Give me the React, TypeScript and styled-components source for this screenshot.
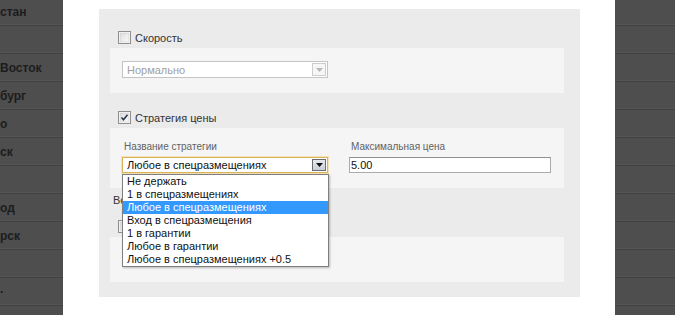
import React from "react";
import styled, { createGlobalStyle, css } from "styled-components";

const Global = createGlobalStyle`
  html, body { margin: 0; padding: 0; background: #4e4e4e; }
  body { font-family: "Liberation Sans", Arial, sans-serif; }
  * { box-sizing: border-box; }
`;

const Page = styled.div`
  display: flex;
  width: 675px;
  height: 315px;
  overflow: hidden;
  background: #4e4e4e;
`;

const Side = styled.div<{ $w: number }>`
  width: ${(p) => p.$w}px;
  flex: none;
  overflow: hidden;
  background: #4e4e4e;
`;

const SideList = styled.ul`
  list-style: none;
  margin: -2px 0 0;
  padding: 0;
`;

const SideItem = styled.li`
  height: 28px;
  border-bottom: 1px solid #414141;
  box-shadow: inset 0 -1px 0 #555;
  display: flex;
  align-items: center;
  white-space: nowrap;
  font-size: 12px;
  font-weight: bold;
  color: #1c1c1c;
  padding-top: 1px;
`;

const Modal = styled.div`
  width: 552px;
  flex: none;
  background: #ffffff;
  padding: 9px 35px 0 36px;
`;

const Panel = styled.div`
  background: #ebebeb;
  padding: 22px 16px 15px 11px;
  height: 288px;
`;

const Section = styled.div<{ $mt: number }>`
  margin-top: ${(p) => p.$mt}px;
`;

const CheckRow = styled.label`
  display: flex;
  align-items: center;
  gap: 4px;
  height: 13px;
  padding-left: 8px;
  margin-bottom: 4px;
  font-size: 11px;
  color: #333;
`;

const Box = styled.div<{ $pt: number; $h?: number }>`
  background: #f5f5f5;
  padding: ${(p) => p.$pt}px 12px 15px;
  display: flex;
  gap: 21px;
  ${(p) => p.$h && css`height: ${p.$h}px;`}
`;

const Heading = styled.div`
  margin-top: 5px;
  margin-left: 3px;
  height: 14px;
  line-height: 14px;
  font-size: 11px;
  color: #333;
`;

const Field = styled.div`
  display: flex;
  flex-direction: column;
`;

const Label = styled.div`
  font-size: 10px;
  line-height: 12px;
  color: #626262;
  margin-top: 1px;
  margin-bottom: 4px;
  padding-left: 2px;
`;

const SelectWrap = styled.div`
  position: relative;
`;

const SelectBox = styled.div<{ $state: "disabled" | "focus"; $h: number }>`
  width: 206px;
  height: ${(p) => p.$h}px;
  display: flex;
  align-items: center;
  background: #fff;
  font-size: 11px;
  padding-left: 4px;
  ${(p) =>
    p.$state === "disabled"
      ? css`
          border: 1px solid #c4c4c4;
          color: #a0a0a0;
        `
      : css`
          border: 1px solid #d9b35a;
          box-shadow: 0 0 0 1px #f3e2b4;
          color: #111;
        `}
`;

const SelectText = styled.span`
  flex: 1;
  white-space: nowrap;
  overflow: hidden;
`;

const ArrowBtn = styled.span<{ $state: "disabled" | "focus" }>`
  width: 14px;
  align-self: stretch;
  display: flex;
  align-items: center;
  justify-content: center;
  margin: 1px;
  ${(p) =>
    p.$state === "disabled"
      ? css`
          border: 1px solid #cdcdcd;
          background: #f6f6f6;
        `
      : css`
          border: 1px solid #6d6d6d;
          background: linear-gradient(#e6eaee, #c8d0d8);
        `}
`;

const Dropdown = styled.ul`
  position: absolute;
  top: calc(100% + 1px);
  left: 0;
  width: 207px;
  margin: 0;
  padding: 0;
  list-style: none;
  background: #fff;
  border: 1px solid #7f7f7f;
  box-shadow: 1px 1px 2px rgba(0, 0, 0, 0.25);
  z-index: 5;
`;

const Option = styled.li<{ $active?: boolean }>`
  height: 13px;
  line-height: 13px;
  font-size: 11px;
  padding-left: 4px;
  white-space: nowrap;
  color: ${(p) => (p.$active ? "#fff" : "#111")};
  background: ${(p) => (p.$active ? "#3399ff" : "transparent")};
`;

const TextInput = styled.div`
  width: 202px;
  height: 16px;
  border: 1px solid #ababab;
  border-top-color: #8e8e8e;
  background: #fff;
  font-size: 11px;
  line-height: 14px;
  padding-left: 1px;
  color: #111;
`;

const Check = ({ checked }: { checked?: boolean }) => (
  <svg width="13" height="13" viewBox="0 0 13 13" style={{ flex: "none" }}>
    <defs>
      <linearGradient id="cbg" x1="0" y1="0" x2="1" y2="1">
        <stop offset="0" stopColor="#dcdcdc" />
        <stop offset="1" stopColor="#fbfbfb" />
      </linearGradient>
    </defs>
    <rect x="0.5" y="0.5" width="12" height="12" fill="#fff" stroke="#8f8f8f" />
    <rect x="2" y="2" width="9" height="9" fill="url(#cbg)" stroke="#c9c9c9" strokeWidth="0.6" />
    {checked && (
      <path d="M3.5 6.5 L5.5 8.8 L9.5 3.8" fill="none" stroke="#2a3552" strokeWidth="1.6" />
    )}
  </svg>
);

const Tri = ({ color }: { color: string }) => (
  <svg width="7" height="4" viewBox="0 0 7 4">
    <path d="M0 0 H7 L3.5 4 Z" fill={color} />
  </svg>
);

const leftItems = ["стан", "", "Восток", "бург", "о", "ск", "", "од", "рск", "", "·", ""];

const options = [
  "Не держать",
  "1 в спецразмещениях",
  "Любое в спецразмещениях",
  "Вход в спецразмещения",
  "1 в гарантии",
  "Любое в гарантии",
  "Любое в спецразмещениях +0.5",
];

export default function App() {
  return (
    <>
      <Global />
      <Page>
        <Side $w={63}>
          <SideList>
            {leftItems.map((t, i) => (
              <SideItem key={i}>{t}</SideItem>
            ))}
          </SideList>
        </Side>
        <Modal>
          <Panel>
            <Section $mt={0}>
              <CheckRow>
                <Check />
                Скорость
              </CheckRow>
              <Box $pt={13}>
                <SelectBox $state="disabled" $h={17}>
                  <SelectText>Нормально</SelectText>
                  <ArrowBtn $state="disabled">
                    <Tri color="#b5b5b5" />
                  </ArrowBtn>
                </SelectBox>
              </Box>
            </Section>
            <Section $mt={18}>
              <CheckRow>
                <Check checked />
                Стратегия цены
              </CheckRow>
              <Box $pt={12}>
                <Field>
                  <Label>Название стратегии</Label>
                  <SelectWrap>
                    <SelectBox $state="focus" $h={16}>
                      <SelectText>Любое в спецразмещениях</SelectText>
                      <ArrowBtn $state="focus">
                        <Tri color="#111" />
                      </ArrowBtn>
                    </SelectBox>
                    <Dropdown>
                      {options.map((o, i) => (
                        <Option key={o} $active={i === 2}>
                          {o}
                        </Option>
                      ))}
                    </Dropdown>
                  </SelectWrap>
                </Field>
                <Field>
                  <Label>Максимальная цена</Label>
                  <TextInput>5.00</TextInput>
                </Field>
              </Box>
            </Section>
            <Heading>Во</Heading>
            <Section $mt={13}>
              <CheckRow>
                <Check />
              </CheckRow>
              <Box $pt={13} $h={45} />
            </Section>
          </Panel>
        </Modal>
        <Side $w={60}>
          <SideList>
            {leftItems.map((_, i) => (
              <SideItem key={i} />
            ))}
          </SideList>
        </Side>
      </Page>
    </>
  );
}
